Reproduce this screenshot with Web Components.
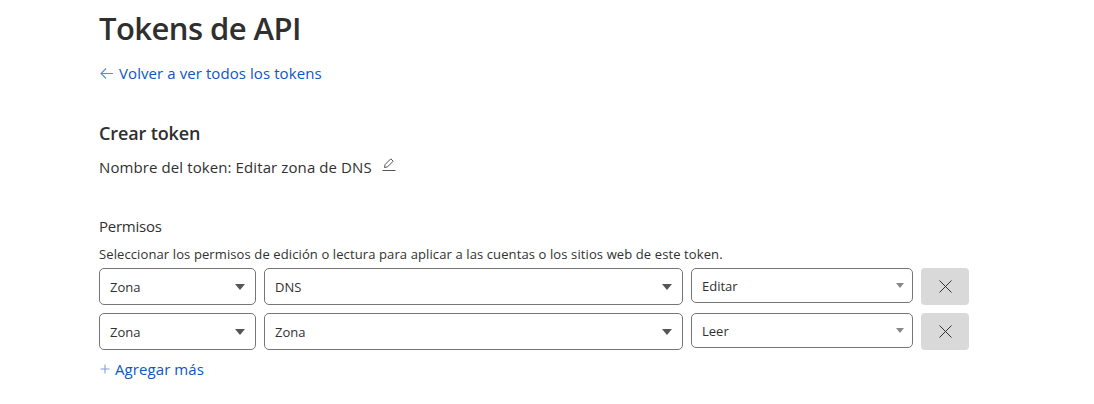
<!DOCTYPE html>
<html lang="es"><head><meta charset="utf-8"><title>Tokens de API</title>
<style>
html,body{margin:0;background:#fff}
body{font-family:"Open Sans","Noto Sans",sans-serif;color:#313131}
</style></head><body>
<token-page></token-page>
<template id="t-page"><style>
:host{display:flex;flex-direction:column;padding:0 0 0 99px;width:995px;height:404px;box-sizing:border-box;overflow:hidden}
h1{margin:8px 0 0;font-size:31px;line-height:40px;font-weight:600;letter-spacing:-.55px;color:#2f2f2f}
a{color:#0f55c4;text-decoration:none}
.back{display:flex;align-items:center;gap:5px;margin-top:15px;font-size:15px;line-height:20px;letter-spacing:.08px;height:20px}
h2{margin:38px 0 0;font-size:18px;line-height:24px;font-weight:600;letter-spacing:-.13px;color:#2f2f2f}
.name{display:flex;align-items:center;margin-top:12px;font-size:15px;line-height:20px;letter-spacing:.1px;height:20px}
.name svg{margin:-5px 0 0 10px}
.perm{margin-top:39px;font-size:15px;line-height:20px;letter-spacing:-.25px}
.help{margin-top:10px;font-size:13px;line-height:17px;letter-spacing:.11px}
.rows{display:flex;flex-direction:column;gap:8px;margin-top:5px}
.add{display:flex;align-items:center;gap:4px;margin-top:9px;font-size:15px;line-height:20px;letter-spacing:.08px}
</style>
<h1>Tokens de API</h1>
<a class="back" href="#"><svg width="15" height="14" viewBox="0 0 15 14" fill="none" stroke="#5b8ad6" stroke-width="1.1"><path d="M14 7.5H2M7 2.5L2 7.5l5 5"/></svg>Volver a ver todos los tokens</a>
<h2>Crear token</h2>
<div class="name">Nombre del token: Editar zona de DNS<svg width="14" height="15" viewBox="0 0 14 15" fill="none" stroke="#555" stroke-width="1"><path d="M.5 13.5h13M2.5 10.5l.6-3L8.8 1.8l2.4 2.4-5.7 5.7z"/></svg></div>
<div class="perm">Permisos</div>
<div class="help">Seleccionar los permisos de edición o lectura para aplicar a las cuentas o los sitios web de este token.</div>
<div class="rows">
<perm-row a="Zona" b="DNS" c="Editar"></perm-row>
<perm-row a="Zona" b="Zona" c="Leer"></perm-row>
</div>
<a class="add" href="#"><svg width="12" height="12" viewBox="0 0 12 12" stroke="#7da3e0" stroke-width="1.1"><path d="M6 1.5v9M1.5 6h9"/></svg>Agregar más</a>
</template>
<template id="t-row"><style>
:host{display:flex;gap:8px;height:37px;align-items:flex-start}
.x{width:48px;height:37px;border:0;border-radius:4px;background:#d9d9d9;display:flex;align-items:center;justify-content:center;padding:0}
#c{--pr:8px;--aw:4.5px;--ah:5px}
</style>
<select-box id="a" style="width:157px;height:37px" arrow="#555"></select-box>
<select-box id="b" style="width:419px;height:37px" arrow="#555"></select-box>
<select-box id="c" style="width:222px;height:35px" arrow="#888"></select-box>
<button class="x" aria-label="Quitar"><svg width="13" height="13" viewBox="0 0 13 13" stroke="#333" stroke-width="1"><path d="M.5.5l12 12M12.5.5l-12 12"/></svg></button>
</template>
<template id="t-select"><style>
:host{display:flex;align-items:center;justify-content:space-between;box-sizing:border-box;border:1px solid #767676;border-radius:5px;padding:0 var(--pr,10px) 0 10px;font-size:13px;letter-spacing:0;background:#fff}
i{display:block;width:0;height:0;border:var(--aw,5.5px) solid transparent;border-bottom:0;border-top:var(--ah,6px) solid var(--c,#555)}
</style><span><slot></slot></span><i></i></template>
<script>
const mk=(id,host)=>host.attachShadow({mode:"open"}).appendChild(document.getElementById(id).content.cloneNode(true));
customElements.define("select-box",class extends HTMLElement{connectedCallback(){if(this.shadowRoot)return;mk("t-select",this);this.style.setProperty("--c",this.getAttribute("arrow"))}});
customElements.define("perm-row",class extends HTMLElement{connectedCallback(){if(this.shadowRoot)return;mk("t-row",this);for(const k of["a","b","c"])this.shadowRoot.getElementById(k).textContent=this.getAttribute(k)}});
customElements.define("token-page",class extends HTMLElement{connectedCallback(){if(this.shadowRoot)return;mk("t-page",this)}});
</script>
</body></html>
